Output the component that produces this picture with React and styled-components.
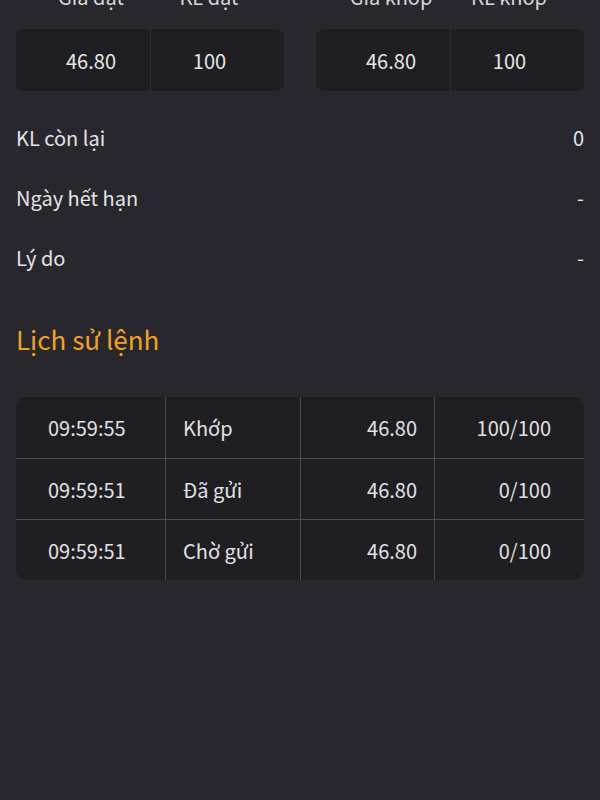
import React from "react";
import styled, { createGlobalStyle } from "styled-components";

const Global = createGlobalStyle`
  html, body { margin: 0; padding: 0; background: #28272d; }
  body {
    font-family: "Noto Sans CJK SC", "Noto Sans", sans-serif;
    color: #e4e4e6;
    overflow: hidden;
  }
  * { box-sizing: border-box; }
`;

const Page = styled.div`
  width: 600px;
  height: 800px;
  background: #28272d;
  padding: 0 16px;
  overflow: hidden;
`;

const Inner = styled.div`
  margin-top: -17px;
`;

const TopGrid = styled.div`
  display: grid;
  grid-template-columns: 268px 268px;
  justify-content: space-between;
`;

const Group = styled.div`
  display: flex;
  flex-direction: column;
`;

const Pair = styled.div`
  display: grid;
  grid-template-columns: 118px 118px;
  padding: 0 16px;
`;

const HeadLabel = styled.div`
  font-size: 20px;
  line-height: 28px;
  text-align: center;
  color: #d8d8da;
`;

const Card = styled(Pair)`
  margin-top: 18px;
  height: 62px;
  background: #1f1e23;
  border-radius: 8px;
`;

const CardCell = styled.div`
  display: flex;
  align-items: center;
  justify-content: center;
  font-size: 20px;
  color: #e6e6e8;
  border-left: ${(p) => (p.$divider ? "1px solid #2e2d33" : "none")};
`;

const InfoList = styled.div`
  margin-top: 16px;
  display: flex;
  flex-direction: column;
`;

const InfoRow = styled.div`
  height: 60px;
  display: flex;
  align-items: center;
  justify-content: space-between;
  font-size: 20px;
  color: #e4e4e6;
`;

const Title = styled.div`
  margin-top: 31px;
  height: 40px;
  display: flex;
  align-items: center;
  font-size: 26px;
  color: #f3a21f;
`;

const Table = styled.div`
  margin-top: 39px;
  background: #1f1e23;
  border-radius: 10px;
  overflow: hidden;
`;

const TRow = styled.div`
  display: grid;
  grid-template-columns: 149px 135px 134px 149px;
  height: ${(p) => (p.$first ? "61px" : "61px")};
  border-top: ${(p) => (p.$first ? "none" : "1px solid #4c4b51")};
`;

const TCell = styled.div`
  display: flex;
  align-items: center;
  justify-content: ${(p) => (p.$right ? "flex-end" : "flex-start")};
  padding: ${(p) => p.$pad};
  font-size: 20px;
  color: #e2e2e4;
  border-left: ${(p) => (p.$divider ? "1px solid #4c4b51" : "none")};
`;

const history = [
  ["09:59:55", "Khớp", "46.80", "100/100"],
  ["09:59:51", "Đã gửi", "46.80", "0/100"],
  ["09:59:51", "Chờ gửi", "46.80", "0/100"],
];

export default function App() {
  return (
    <>
      <Global />
      <Page>
        <Inner>
          <TopGrid>
            <Group>
              <Pair>
                <HeadLabel>Giá đặt</HeadLabel>
                <HeadLabel>KL đặt</HeadLabel>
              </Pair>
              <Card>
                <CardCell>46.80</CardCell>
                <CardCell $divider>100</CardCell>
              </Card>
            </Group>
            <Group>
              <Pair>
                <HeadLabel>Giá khớp</HeadLabel>
                <HeadLabel>KL khớp</HeadLabel>
              </Pair>
              <Card>
                <CardCell>46.80</CardCell>
                <CardCell $divider>100</CardCell>
              </Card>
            </Group>
          </TopGrid>
          <InfoList>
            <InfoRow>
              <span>KL còn lại</span>
              <span>0</span>
            </InfoRow>
            <InfoRow>
              <span>Ngày hết hạn</span>
              <span>-</span>
            </InfoRow>
            <InfoRow>
              <span>Lý do</span>
              <span>-</span>
            </InfoRow>
          </InfoList>
          <Title>Lịch sử lệnh</Title>
          <Table>
            {history.map((r, i) => (
              <TRow key={i} $first={i === 0}>
                <TCell $pad="0 0 0 32px">{r[0]}</TCell>
                <TCell $divider $pad="0 0 0 17px">{r[1]}</TCell>
                <TCell $divider $right $pad="0 17px 0 0">{r[2]}</TCell>
                <TCell $divider $right $pad="0 32px 0 0">{r[3]}</TCell>
              </TRow>
            ))}
          </Table>
        </Inner>
      </Page>
    </>
  );
}
